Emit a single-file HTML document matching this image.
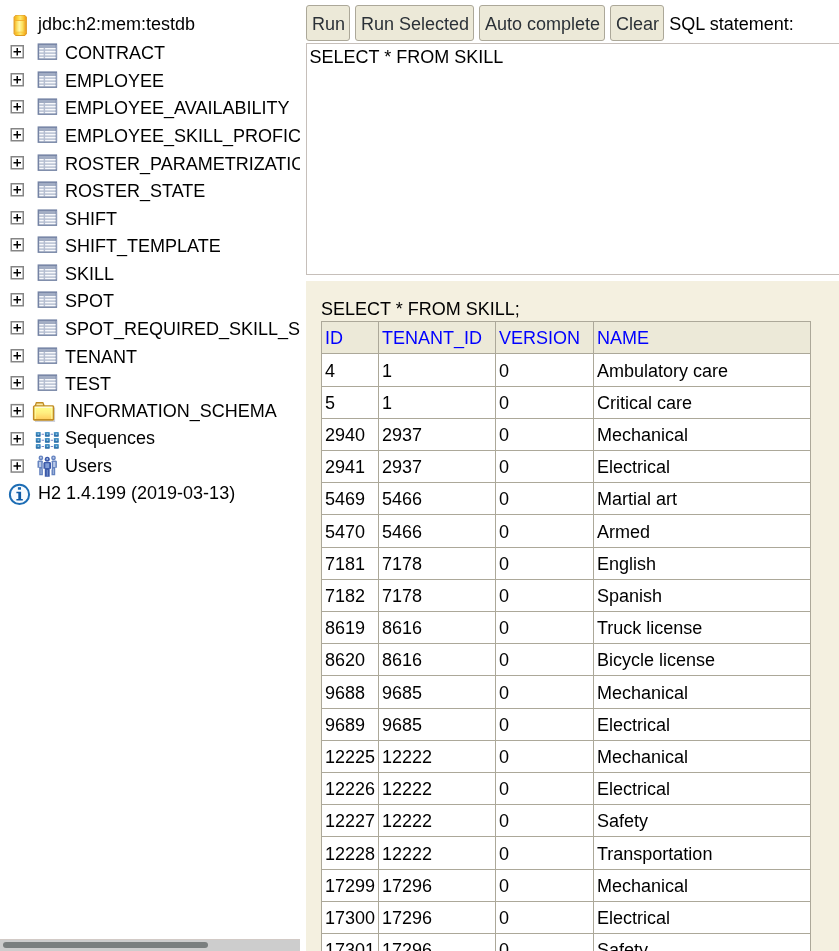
<!DOCTYPE html>
<html><head><meta charset="utf-8"><title>H2 Console</title>
<style>
html,body{margin:0;padding:0;background:#fff;}
body{width:839px;height:951px;overflow:hidden;position:relative;font-family:"Liberation Sans",sans-serif;font-size:18px;color:#000;}
#left{will-change:transform;position:absolute;left:0;top:0;width:300px;height:939px;overflow:hidden;background:#fff;}
.t{position:absolute;white-space:nowrap;line-height:20px;height:20px;}
svg{position:absolute;overflow:visible;}
.plus{left:10.5px;}
.ticon{left:37.4px;}
#hs{position:absolute;left:0;top:939px;width:300px;height:12px;background:#cdcdcd;border-top:1px solid #d2cac6;box-sizing:border-box;}
#hs div{position:absolute;left:3px;top:2px;width:205px;height:6px;border-radius:3px;background:#7a7f7f;}
#right{will-change:transform;position:absolute;left:306px;top:0;width:533px;height:951px;overflow:hidden;background:#fff;}
.btn{position:absolute;top:5px;height:36px;box-sizing:border-box;border:1px solid #aca899;border-radius:3px;background:#ece9d8;}
.bl{color:#2b3137;}
#ta{position:absolute;left:0;top:43px;width:600px;height:232px;box-sizing:border-box;border:1px solid #c6bfba;background:#fff;}
#res{position:absolute;left:0;top:281px;width:533px;height:700px;background:#f4f0e0;}
#grid{position:absolute;left:15px;top:40px;width:490px;height:640px;background:#fff;}
#grid .h{position:absolute;left:0;width:490px;height:1px;background:#aca899;}
#grid .v{position:absolute;top:0;width:1px;height:640px;background:#aca899;}
#hd{position:absolute;left:0;top:0;width:490px;height:32px;background:#ece9d8;}
.th{color:#0000ff;}
</style></head><body>
<svg width="0" height="0"><defs>
<filter id="b2" x="-20%" y="-20%" width="140%" height="140%"><feGaussianBlur stdDeviation="0.18"/></filter>
<filter id="b3" x="-20%" y="-20%" width="140%" height="140%"><feGaussianBlur stdDeviation="0.3"/></filter>
<filter id="b9" x="-30%" y="-30%" width="160%" height="160%"><feGaussianBlur stdDeviation="0.7"/></filter>
<filter id="b5" x="-20%" y="-20%" width="140%" height="140%"><feGaussianBlur stdDeviation="0.45"/></filter>
<linearGradient id="dbg" x1="0" x2="1" y1="0" y2="0"><stop offset="0" stop-color="#efac2c"/><stop offset="0.14" stop-color="#fad34c"/><stop offset="0.42" stop-color="#fff8a6"/><stop offset="0.7" stop-color="#fce05c"/><stop offset="1" stop-color="#ea9a1c"/></linearGradient>
<linearGradient id="dbc" x1="0" x2="1" y1="0" y2="0"><stop offset="0" stop-color="#f0ac22"/><stop offset="0.3" stop-color="#fdd53a"/><stop offset="0.5" stop-color="#fde872"/><stop offset="0.8" stop-color="#f9c22e"/><stop offset="1" stop-color="#ec9a18"/></linearGradient>
<linearGradient id="fg" x1="0" x2="0" y1="0" y2="1"><stop offset="0" stop-color="#ffff8a"/><stop offset="0.5" stop-color="#ffee80"/><stop offset="1" stop-color="#ffcf60"/></linearGradient>
<linearGradient id="sq" x1="0" x2="0" y1="0" y2="1"><stop offset="0" stop-color="#4b98c9"/><stop offset="1" stop-color="#2367a3"/></linearGradient>
<g id="plus" filter="url(#b2)"><rect x="0.5" y="0.5" width="8" height="8" fill="#fff" stroke="#858585" stroke-width="1"/><path d="M2 4.5H7M4.5 2V7" stroke="#000" stroke-width="1"/></g>
<g id="tic" filter="url(#b3)"><rect x="0" y="0" width="13" height="11" fill="#7483a4"/><rect x="1" y="1" width="11" height="2" fill="#a2adc4"/><rect x="12" y="1" width="1" height="9" fill="#94a1bc"/><rect x="1" y="3" width="11" height="7" fill="#c0c8d8"/><rect x="4" y="3" width="1" height="7" fill="#b4bdd0"/><path d="M1.2 3.5H4M5 3.5H12M1.2 5.5H4M5 5.5H12M1.2 7.5H4M5 7.5H12M1.2 9.5H4M5 9.5H12" stroke="#f8f9fc" stroke-width="0.95"/></g>
</defs></svg>
<div id="left">

<svg style="left:13px;top:14px" width="16" height="23" viewBox="0 0 16 23"><g filter="url(#b5)" transform="translate(0.55 0.9) scale(0.955 1)"><path d="M2.2 0H11.8L14 2.2V18.8L11.8 21H2.2L0 18.8V2.2Z" fill="#df9a24"/><rect x="0.9" y="0.9" width="12.2" height="19.2" rx="2" fill="url(#dbg)"/><rect x="0.9" y="0.9" width="12.2" height="4.5" rx="2" fill="url(#dbc)"/><rect x="0.9" y="17.3" width="12.2" height="2.8" rx="2" fill="url(#dbc)"/><path d="M0.8 5.6H13.2" stroke="#f2ac28" stroke-width="0.9"/><path d="M0.8 17.2H13.2" stroke="#f6bc34" stroke-width="0.7"/></g></svg>
<div class="t" style="left:38px;top:14px">jdbc:h2:mem:testdb</div>
<svg style="left:10px;top:45px" width="16" height="16" viewBox="0 0 16 16"><g transform="translate(0.5 0) scale(1.5)"><use href="#plus"/></g></svg>
<svg style="left:37px;top:43px" width="22" height="19" viewBox="0 0 22 19"><g transform="translate(0.6 0.4) scale(1.5)"><use href="#tic"/></g></svg>
<div class="t" style="left:65px;top:43px">CONTRACT</div>
<svg style="left:10px;top:73px" width="16" height="16" viewBox="0 0 16 16"><g transform="translate(0.5 0) scale(1.5)"><use href="#plus"/></g></svg>
<svg style="left:37px;top:71px" width="22" height="19" viewBox="0 0 22 19"><g transform="translate(0.6 0.4) scale(1.5)"><use href="#tic"/></g></svg>
<div class="t" style="left:65px;top:71px">EMPLOYEE</div>
<svg style="left:10px;top:100px" width="16" height="16" viewBox="0 0 16 16"><g transform="translate(0.5 0) scale(1.5)"><use href="#plus"/></g></svg>
<svg style="left:37px;top:98px" width="22" height="19" viewBox="0 0 22 19"><g transform="translate(0.6 0.4) scale(1.5)"><use href="#tic"/></g></svg>
<div class="t" style="left:65px;top:98px">EMPLOYEE_AVAILABILITY</div>
<svg style="left:10px;top:128px" width="16" height="16" viewBox="0 0 16 16"><g transform="translate(0.5 0) scale(1.5)"><use href="#plus"/></g></svg>
<svg style="left:37px;top:126px" width="22" height="19" viewBox="0 0 22 19"><g transform="translate(0.6 0.4) scale(1.5)"><use href="#tic"/></g></svg>
<div class="t" style="left:65px;top:126px">EMPLOYEE_SKILL_PROFICIENCY</div>
<svg style="left:10px;top:156px" width="16" height="16" viewBox="0 0 16 16"><g transform="translate(0.5 0) scale(1.5)"><use href="#plus"/></g></svg>
<svg style="left:37px;top:154px" width="22" height="19" viewBox="0 0 22 19"><g transform="translate(0.6 0.4) scale(1.5)"><use href="#tic"/></g></svg>
<div class="t" style="left:65px;top:154px">ROSTER_PARAMETRIZATION</div>
<svg style="left:10px;top:183px" width="16" height="16" viewBox="0 0 16 16"><g transform="translate(0.5 0) scale(1.5)"><use href="#plus"/></g></svg>
<svg style="left:37px;top:181px" width="22" height="19" viewBox="0 0 22 19"><g transform="translate(0.6 0.4) scale(1.5)"><use href="#tic"/></g></svg>
<div class="t" style="left:65px;top:181px">ROSTER_STATE</div>
<svg style="left:10px;top:211px" width="16" height="16" viewBox="0 0 16 16"><g transform="translate(0.5 0) scale(1.5)"><use href="#plus"/></g></svg>
<svg style="left:37px;top:209px" width="22" height="19" viewBox="0 0 22 19"><g transform="translate(0.6 0.4) scale(1.5)"><use href="#tic"/></g></svg>
<div class="t" style="left:65px;top:209px">SHIFT</div>
<svg style="left:10px;top:238px" width="16" height="16" viewBox="0 0 16 16"><g transform="translate(0.5 0) scale(1.5)"><use href="#plus"/></g></svg>
<svg style="left:37px;top:236px" width="22" height="19" viewBox="0 0 22 19"><g transform="translate(0.6 0.4) scale(1.5)"><use href="#tic"/></g></svg>
<div class="t" style="left:65px;top:236px">SHIFT_TEMPLATE</div>
<svg style="left:10px;top:266px" width="16" height="16" viewBox="0 0 16 16"><g transform="translate(0.5 0) scale(1.5)"><use href="#plus"/></g></svg>
<svg style="left:37px;top:264px" width="22" height="19" viewBox="0 0 22 19"><g transform="translate(0.6 0.4) scale(1.5)"><use href="#tic"/></g></svg>
<div class="t" style="left:65px;top:264px">SKILL</div>
<svg style="left:10px;top:293px" width="16" height="16" viewBox="0 0 16 16"><g transform="translate(0.5 0) scale(1.5)"><use href="#plus"/></g></svg>
<svg style="left:37px;top:291px" width="22" height="19" viewBox="0 0 22 19"><g transform="translate(0.6 0.4) scale(1.5)"><use href="#tic"/></g></svg>
<div class="t" style="left:65px;top:291px">SPOT</div>
<svg style="left:10px;top:321px" width="16" height="16" viewBox="0 0 16 16"><g transform="translate(0.5 0) scale(1.5)"><use href="#plus"/></g></svg>
<svg style="left:37px;top:319px" width="22" height="19" viewBox="0 0 22 19"><g transform="translate(0.6 0.4) scale(1.5)"><use href="#tic"/></g></svg>
<div class="t" style="left:65px;top:319px">SPOT_REQUIRED_SKILL_SET</div>
<svg style="left:10px;top:349px" width="16" height="16" viewBox="0 0 16 16"><g transform="translate(0.5 0) scale(1.5)"><use href="#plus"/></g></svg>
<svg style="left:37px;top:347px" width="22" height="19" viewBox="0 0 22 19"><g transform="translate(0.6 0.4) scale(1.5)"><use href="#tic"/></g></svg>
<div class="t" style="left:65px;top:347px">TENANT</div>
<svg style="left:10px;top:376px" width="16" height="16" viewBox="0 0 16 16"><g transform="translate(0.5 0) scale(1.5)"><use href="#plus"/></g></svg>
<svg style="left:37px;top:374px" width="22" height="19" viewBox="0 0 22 19"><g transform="translate(0.6 0.4) scale(1.5)"><use href="#tic"/></g></svg>
<div class="t" style="left:65px;top:374px">TEST</div>
<svg style="left:10px;top:403px" width="16" height="16" viewBox="0 0 16 16"><g transform="translate(0.5 0.9) scale(1.5)"><use href="#plus"/></g></svg>
<div class="t" style="left:65px;top:401px">INFORMATION_SCHEMA</div>
<svg style="left:10px;top:432px" width="16" height="16" viewBox="0 0 16 16"><g transform="translate(0.5 0) scale(1.5)"><use href="#plus"/></g></svg>
<div class="t" style="left:65px;top:428px">Sequences</div>
<svg style="left:10px;top:459px" width="16" height="16" viewBox="0 0 16 16"><g transform="translate(0.5 0.3) scale(1.5)"><use href="#plus"/></g></svg>
<div class="t" style="left:65px;top:456px">Users</div>
<svg style="left:32px;top:401px" width="26" height="24" viewBox="0 0 26 24"><g filter="url(#b9)" opacity="0.8"><path d="M3 20.1H22.3V6.5" stroke="#c3c8d6" stroke-width="1.6" fill="none"/></g><g filter="url(#b5)"><path d="M0.9 5.4L2.1 4.2H2.8L3.9 1H11.3L12.6 4.2H21.2L22.2 5.2V18.7L21.1 19.8H2L0.9 18.7Z" fill="#c28d24"/><path d="M4.7 2.6H10.6L11.1 4.3H4.2Z" fill="#faeaa8"/><rect x="2.6" y="5.7" width="17.9" height="12.3" fill="url(#fg)"/><rect x="2.6" y="5.6" width="17.9" height="1.3" fill="#fffbe2"/><rect x="2.6" y="6.9" width="1.2" height="11.1" fill="#ffffa6" opacity="0.85"/><rect x="19.3" y="6.9" width="1.2" height="11.1" fill="#ffffa6" opacity="0.85"/></g></svg>
<svg style="left:35px;top:431px" width="25" height="19" viewBox="0 0 25 19"><g filter="url(#b5)"><path d="M6.6 3.3 H9.0M15.7 3.3 H18.1" stroke="#6878c6" stroke-width="1.05" opacity="0.9"/><rect x="0.8" y="0.9" width="4.9" height="4.8" rx="0.7" fill="url(#sq)"/><rect x="2.6" y="2.4" width="1.5" height="1.5" fill="#95c5e6"/><rect x="9.9" y="0.9" width="4.9" height="4.8" rx="0.7" fill="url(#sq)"/><rect x="11.7" y="2.4" width="1.5" height="1.5" fill="#95c5e6"/><rect x="18.9" y="0.9" width="4.9" height="4.8" rx="0.7" fill="url(#sq)"/><rect x="20.7" y="2.4" width="1.5" height="1.5" fill="#95c5e6"/><path d="M6.6 9.3 H9.0M15.7 9.3 H18.1" stroke="#6878c6" stroke-width="1.05" opacity="0.9"/><rect x="0.8" y="6.9" width="4.9" height="4.8" rx="0.7" fill="url(#sq)"/><rect x="2.6" y="8.4" width="1.5" height="1.5" fill="#95c5e6"/><rect x="9.9" y="6.9" width="4.9" height="4.8" rx="0.7" fill="url(#sq)"/><rect x="11.7" y="8.4" width="1.5" height="1.5" fill="#95c5e6"/><rect x="18.9" y="6.9" width="4.9" height="4.8" rx="0.7" fill="url(#sq)"/><rect x="20.7" y="8.4" width="1.5" height="1.5" fill="#95c5e6"/><path d="M6.6 15.4 H9.0M15.7 15.4 H18.1" stroke="#6878c6" stroke-width="1.05" opacity="0.9"/><rect x="0.8" y="13" width="4.9" height="4.8" rx="0.7" fill="url(#sq)"/><rect x="2.6" y="14.5" width="1.5" height="1.5" fill="#95c5e6"/><rect x="9.9" y="13" width="4.9" height="4.8" rx="0.7" fill="url(#sq)"/><rect x="11.7" y="14.5" width="1.5" height="1.5" fill="#95c5e6"/><rect x="18.9" y="13" width="4.9" height="4.8" rx="0.7" fill="url(#sq)"/><rect x="20.7" y="14.5" width="1.5" height="1.5" fill="#95c5e6"/></g></svg>
<svg style="left:36px;top:455px" width="23" height="23" viewBox="0 0 23 23"><g filter="url(#b5)"><circle cx="4.9" cy="2.9" r="2.35" fill="#6482bf"/><circle cx="4.9" cy="2.8" r="0.95" fill="#bccbe9"/><path d="M2.3 5.5L6.1 5.5L6.9 6.3L6.9 20.3L3.2 20.3L3.2 12.7L1.5 12.7L1.5 6.3Z" fill="#6482bf"/><rect x="2.95" y="6.9" width="2.3" height="5.1" fill="#bccbe9"/><rect x="4.6" y="13.6" width="0.9" height="5.4" fill="#bccbe9" opacity="0.8"/><circle cx="17.5" cy="2.9" r="2.35" fill="#6482bf"/><circle cx="17.5" cy="2.8" r="0.95" fill="#bccbe9"/><path d="M20.1 5.5L16.3 5.5L15.5 6.3L15.5 20.3L19.2 20.3L19.2 12.7L20.9 12.7L20.9 6.3Z" fill="#6482bf"/><rect x="17.15" y="6.9" width="2.3" height="5.1" fill="#bccbe9"/><rect x="16.9" y="13.6" width="0.9" height="5.4" fill="#bccbe9" opacity="0.8"/><path d="M8.3 6.9H14.1L15.1 7.9V13.8H13.7V21.8H8.8V13.8H7.4V7.9Z" fill="#fff" stroke="#fff" stroke-width="1.2"/><circle cx="11.25" cy="4.2" r="3.1" fill="#fff"/><circle cx="11.25" cy="4.2" r="2.5" fill="#3c5aa9"/><circle cx="11.25" cy="4.0" r="0.95" fill="#a9bfe6"/><path d="M8.3 6.9H14.1L15.1 7.9V13.8H13.7V21.8H8.8V13.8H7.4V7.9Z" fill="#3c5aa9"/><rect x="9.3" y="8.3" width="3.9" height="4.7" fill="#809dd7"/><rect x="10.8" y="15" width="0.9" height="5.8" fill="#8eaade" opacity="0.85"/></g></svg>
<svg style="left:8px;top:483px" width="23" height="23" viewBox="0 0 23 23"><g filter="url(#b3)"><circle cx="11.5" cy="11.4" r="9.6" fill="#f7fbff" stroke="#1f6db4" stroke-width="2"/><rect x="9.9" y="4.2" width="3.1" height="2.5" fill="#1565b0"/><path d="M8.4 8.7H13.1V16H14.8V17.5H8.4V16H10.3V10.2H8.4Z" fill="#105aa6"/></g></svg>
<div class="t" style="left:38px;top:483px">H2 1.4.199 (2019-03-13)</div>
</div><div id="hs"><div></div></div>
<div id="right">
<div class="btn" style="left:0px;width:43.6px"></div>
<div class="t bl" style="left:6px;top:14px">Run</div>
<div class="btn" style="left:49.4px;width:118.4px"></div>
<div class="t bl" style="left:55px;top:14px">Run Selected</div>
<div class="btn" style="left:173.2px;width:125.8px"></div>
<div class="t bl" style="left:179px;top:14px">Auto complete</div>
<div class="btn" style="left:304.2px;width:53.8px"></div>
<div class="t bl" style="left:310px;top:14px">Clear</div>
<div class="t" style="left:363.3px;top:14px">SQL statement:</div>
<div id="ta"></div><div class="t" style="left:3.5px;top:47px">SELECT * FROM SKILL</div>
<div id="res"><div class="t" style="left:15px;top:18px">SELECT * FROM SKILL;</div>
<div id="grid"><div id="hd"></div>
<div class="v" style="left:0px"></div>
<div class="v" style="left:57px"></div>
<div class="v" style="left:174px"></div>
<div class="v" style="left:272px"></div>
<div class="v" style="left:489px"></div>
<div class="h" style="top:0"></div>
<div class="h" style="top:32px"></div>
<div class="h" style="top:65px"></div>
<div class="h" style="top:97px"></div>
<div class="h" style="top:129px"></div>
<div class="h" style="top:161px"></div>
<div class="h" style="top:193px"></div>
<div class="h" style="top:226px"></div>
<div class="h" style="top:258px"></div>
<div class="h" style="top:290px"></div>
<div class="h" style="top:322px"></div>
<div class="h" style="top:354px"></div>
<div class="h" style="top:387px"></div>
<div class="h" style="top:419px"></div>
<div class="h" style="top:451px"></div>
<div class="h" style="top:483px"></div>
<div class="h" style="top:515px"></div>
<div class="h" style="top:548px"></div>
<div class="h" style="top:580px"></div>
<div class="h" style="top:612px"></div>
<div class="h" style="top:644px"></div>
<div class="t th" style="left:4px;top:7px">ID</div>
<div class="t th" style="left:61px;top:7px">TENANT_ID</div>
<div class="t th" style="left:178px;top:7px">VERSION</div>
<div class="t th" style="left:276px;top:7px">NAME</div>
<div class="t" style="left:4px;top:40px">4</div>
<div class="t" style="left:61px;top:40px">1</div>
<div class="t" style="left:178px;top:40px">0</div>
<div class="t" style="left:276px;top:40px">Ambulatory care</div>
<div class="t" style="left:4px;top:72px">5</div>
<div class="t" style="left:61px;top:72px">1</div>
<div class="t" style="left:178px;top:72px">0</div>
<div class="t" style="left:276px;top:72px">Critical care</div>
<div class="t" style="left:4px;top:104px">2940</div>
<div class="t" style="left:61px;top:104px">2937</div>
<div class="t" style="left:178px;top:104px">0</div>
<div class="t" style="left:276px;top:104px">Mechanical</div>
<div class="t" style="left:4px;top:136px">2941</div>
<div class="t" style="left:61px;top:136px">2937</div>
<div class="t" style="left:178px;top:136px">0</div>
<div class="t" style="left:276px;top:136px">Electrical</div>
<div class="t" style="left:4px;top:168px">5469</div>
<div class="t" style="left:61px;top:168px">5466</div>
<div class="t" style="left:178px;top:168px">0</div>
<div class="t" style="left:276px;top:168px">Martial art</div>
<div class="t" style="left:4px;top:201px">5470</div>
<div class="t" style="left:61px;top:201px">5466</div>
<div class="t" style="left:178px;top:201px">0</div>
<div class="t" style="left:276px;top:201px">Armed</div>
<div class="t" style="left:4px;top:233px">7181</div>
<div class="t" style="left:61px;top:233px">7178</div>
<div class="t" style="left:178px;top:233px">0</div>
<div class="t" style="left:276px;top:233px">English</div>
<div class="t" style="left:4px;top:265px">7182</div>
<div class="t" style="left:61px;top:265px">7178</div>
<div class="t" style="left:178px;top:265px">0</div>
<div class="t" style="left:276px;top:265px">Spanish</div>
<div class="t" style="left:4px;top:297px">8619</div>
<div class="t" style="left:61px;top:297px">8616</div>
<div class="t" style="left:178px;top:297px">0</div>
<div class="t" style="left:276px;top:297px">Truck license</div>
<div class="t" style="left:4px;top:329px">8620</div>
<div class="t" style="left:61px;top:329px">8616</div>
<div class="t" style="left:178px;top:329px">0</div>
<div class="t" style="left:276px;top:329px">Bicycle license</div>
<div class="t" style="left:4px;top:362px">9688</div>
<div class="t" style="left:61px;top:362px">9685</div>
<div class="t" style="left:178px;top:362px">0</div>
<div class="t" style="left:276px;top:362px">Mechanical</div>
<div class="t" style="left:4px;top:394px">9689</div>
<div class="t" style="left:61px;top:394px">9685</div>
<div class="t" style="left:178px;top:394px">0</div>
<div class="t" style="left:276px;top:394px">Electrical</div>
<div class="t" style="left:4px;top:426px">12225</div>
<div class="t" style="left:61px;top:426px">12222</div>
<div class="t" style="left:178px;top:426px">0</div>
<div class="t" style="left:276px;top:426px">Mechanical</div>
<div class="t" style="left:4px;top:458px">12226</div>
<div class="t" style="left:61px;top:458px">12222</div>
<div class="t" style="left:178px;top:458px">0</div>
<div class="t" style="left:276px;top:458px">Electrical</div>
<div class="t" style="left:4px;top:490px">12227</div>
<div class="t" style="left:61px;top:490px">12222</div>
<div class="t" style="left:178px;top:490px">0</div>
<div class="t" style="left:276px;top:490px">Safety</div>
<div class="t" style="left:4px;top:523px">12228</div>
<div class="t" style="left:61px;top:523px">12222</div>
<div class="t" style="left:178px;top:523px">0</div>
<div class="t" style="left:276px;top:523px">Transportation</div>
<div class="t" style="left:4px;top:555px">17299</div>
<div class="t" style="left:61px;top:555px">17296</div>
<div class="t" style="left:178px;top:555px">0</div>
<div class="t" style="left:276px;top:555px">Mechanical</div>
<div class="t" style="left:4px;top:587px">17300</div>
<div class="t" style="left:61px;top:587px">17296</div>
<div class="t" style="left:178px;top:587px">0</div>
<div class="t" style="left:276px;top:587px">Electrical</div>
<div class="t" style="left:4px;top:619px">17301</div>
<div class="t" style="left:61px;top:619px">17296</div>
<div class="t" style="left:178px;top:619px">0</div>
<div class="t" style="left:276px;top:619px">Safety</div>
</div></div></div></body></html>
